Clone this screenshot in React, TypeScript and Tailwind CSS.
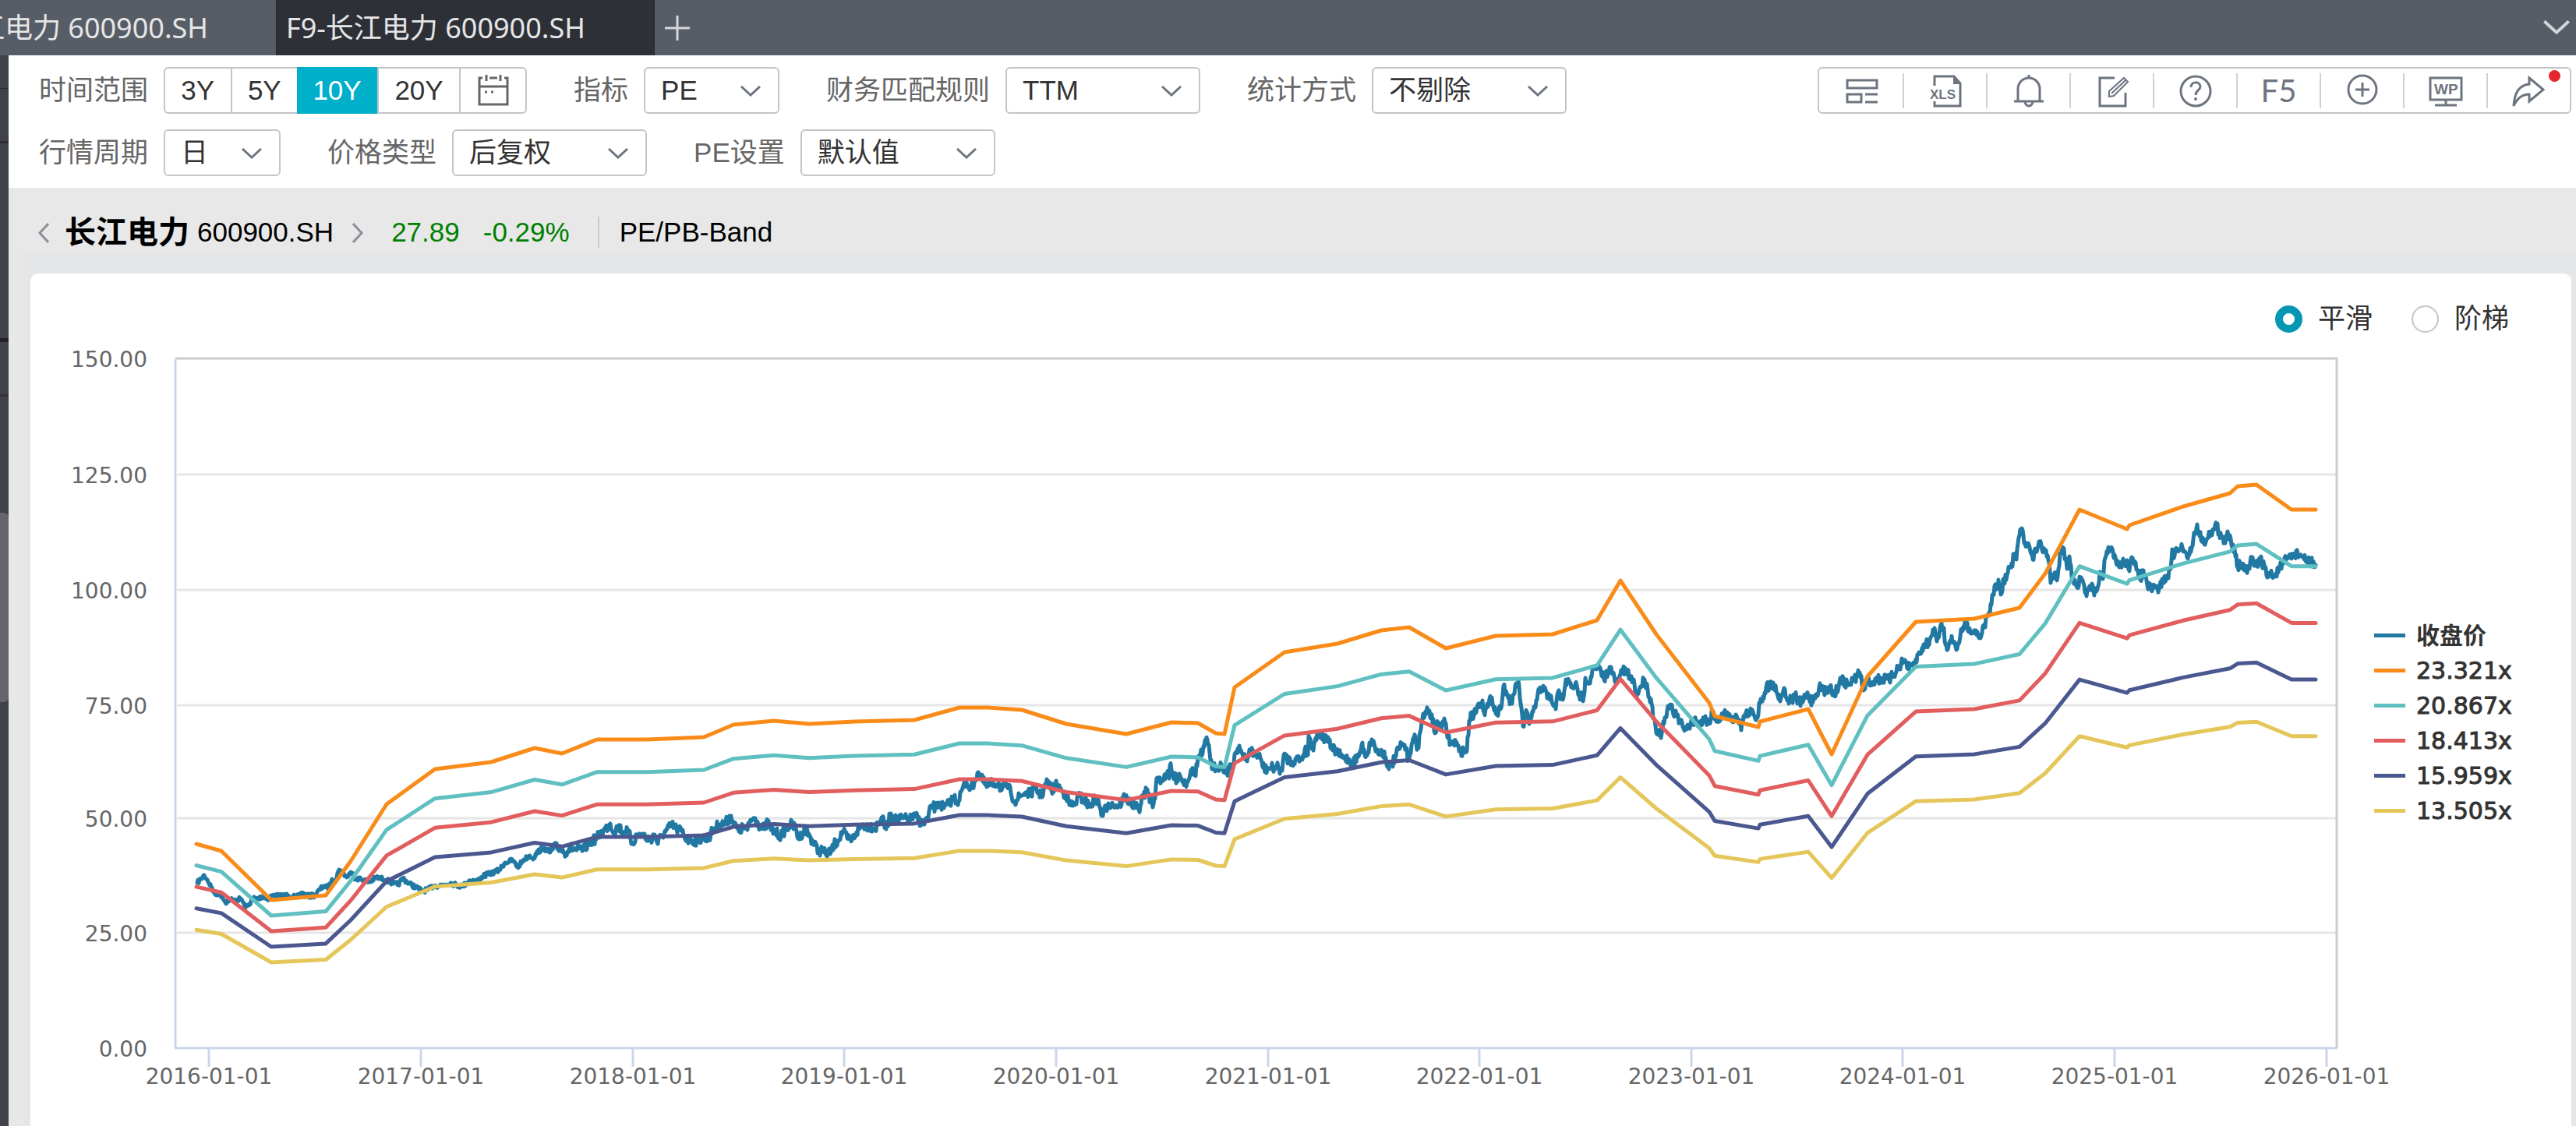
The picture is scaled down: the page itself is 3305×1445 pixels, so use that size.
import React, { useState } from "react";
import type { ReactNode } from "react";

const ranges = ["3Y", "5Y", "10Y", "20Y"];

const bands = [
  { label: "23.321x", multiple: 23.321, color: "#f98b19" },
  { label: "20.867x", multiple: 20.867, color: "#60bfc1" },
  { label: "18.413x", multiple: 18.413, color: "#e15d5e" },
  { label: "15.959x", multiple: 15.959, color: "#4b588f" },
  { label: "13.505x", multiple: 13.505, color: "#e4c65a" },
];

const closeColor = "#2178a3";

const yAxis = [
  { label: "150.00", y: 460 },
  { label: "125.00", y: 609 },
  { label: "100.00", y: 757 },
  { label: "75.00", y: 905 },
  { label: "50.00", y: 1050 },
  { label: "25.00", y: 1197 },
  { label: "0.00", y: 1345 },
];

const xAxis = [
  { label: "2016-01-01", x: 268 },
  { label: "2017-01-01", x: 540 },
  { label: "2018-01-01", x: 812 },
  { label: "2019-01-01", x: 1083 },
  { label: "2020-01-01", x: 1355 },
  { label: "2021-01-01", x: 1627 },
  { label: "2022-01-01", x: 1898 },
  { label: "2023-01-01", x: 2170 },
  { label: "2024-01-01", x: 2441 },
  { label: "2025-01-01", x: 2713 },
  { label: "2026-01-01", x: 2985 },
];

// Upper band, the other bands scale down from it
const topBand: [number, number][] = [
  [252, 1083], [284, 1092], [348, 1155], [418, 1149], [450, 1105], [496, 1032],
  [558, 987], [630, 978], [686, 960], [721, 967], [766, 949], [830, 949],
  [903, 946], [941, 930], [993, 925], [1038, 929], [1096, 926], [1173, 924],
  [1231, 908], [1267, 908], [1311, 911], [1368, 929], [1445, 942], [1503, 927],
  [1537, 928], [1560, 941], [1571, 942], [1584, 882], [1648, 837], [1716, 826],
  [1772, 809], [1808, 805], [1855, 832], [1919, 816], [1992, 814], [2049, 796],
  [2079, 745], [2125, 814], [2193, 902], [2200, 919], [2256, 933], [2258, 926],
  [2320, 910], [2350, 968], [2396, 868], [2458, 798], [2533, 794], [2591, 780],
  [2624, 736], [2668, 654], [2729, 679], [2732, 674], [2801, 650], [2861, 633],
  [2871, 624], [2895, 622], [2940, 654], [2971, 654],
];

const closePrice: number[] = [
  253, 1133, 258, 1128, 262, 1123, 266, 1129, 271, 1138, 276, 1148, 280, 1146, 285, 1150,
  289, 1158, 295, 1154, 300, 1156, 305, 1154, 310, 1154, 315, 1165, 320, 1160, 325, 1152,
  331, 1154, 336, 1150, 342, 1154, 350, 1149, 360, 1150, 370, 1149, 380, 1152, 386, 1146,
  394, 1150, 404, 1149, 410, 1142, 415, 1137, 420, 1140, 425, 1131, 430, 1130, 434, 1118,
  438, 1117, 445, 1126, 450, 1119, 456, 1127, 466, 1129, 474, 1132, 483, 1126, 495, 1129,
  505, 1134, 511, 1135, 517, 1127, 525, 1134, 533, 1138, 541, 1143, 549, 1142, 556, 1137,
  566, 1136, 578, 1133, 586, 1136, 594, 1137, 602, 1130, 612, 1131, 620, 1124, 629, 1121,
  640, 1117, 648, 1107, 658, 1104, 664, 1113, 672, 1103, 680, 1098, 685, 1101, 690, 1093,
  698, 1088, 705, 1094, 713, 1087, 720, 1089, 724, 1094, 732, 1088, 740, 1091, 750, 1090,
  757, 1078, 760, 1080, 774, 1067, 783, 1057, 788, 1068, 793, 1060, 800, 1068, 806, 1067,
  811, 1082, 817, 1073, 823, 1070, 829, 1075, 834, 1078, 840, 1071, 844, 1083, 849, 1072,
  854, 1067, 862, 1059, 868, 1064, 874, 1066, 881, 1077, 887, 1078, 895, 1079, 901, 1075,
  909, 1076, 916, 1063, 923, 1058, 930, 1057, 938, 1047, 942, 1058, 948, 1067, 954, 1061,
  959, 1065, 963, 1052, 969, 1050, 975, 1060, 981, 1064, 985, 1054, 989, 1065, 995, 1068,
  1002, 1073, 1008, 1064, 1014, 1058, 1020, 1062, 1025, 1077, 1032, 1063, 1039, 1073, 1045, 1084,
  1050, 1092, 1055, 1091, 1059, 1096, 1066, 1094, 1070, 1084, 1075, 1079, 1081, 1067, 1087, 1076,
  1093, 1078, 1099, 1068, 1106, 1059, 1115, 1060, 1123, 1063, 1131, 1049, 1137, 1064, 1143, 1044,
  1150, 1053, 1158, 1050, 1166, 1052, 1175, 1048, 1184, 1058, 1191, 1049, 1195, 1034, 1201, 1037,
  1205, 1030, 1211, 1037, 1217, 1032, 1223, 1024, 1230, 1028, 1234, 1014, 1240, 1004, 1246, 1012,
  1251, 1001, 1255, 991, 1259, 999, 1266, 1010, 1273, 1005, 1281, 1005, 1285, 1014, 1292, 1007,
  1297, 1018, 1302, 1028, 1309, 1022, 1316, 1017, 1321, 1019, 1328, 1012, 1336, 1021, 1344, 1003,
  1349, 1014, 1356, 1007, 1363, 1016, 1368, 1020, 1372, 1033, 1379, 1033, 1383, 1022, 1391, 1026,
  1398, 1035, 1405, 1024, 1410, 1032, 1414, 1047, 1422, 1031, 1429, 1033, 1436, 1034, 1443, 1022,
  1451, 1031, 1461, 1039, 1466, 1024, 1471, 1014, 1478, 1031, 1480, 1032, 1485, 998, 1491, 1001,
  1496, 993, 1500, 999, 1501, 982, 1505, 996, 1510, 1000, 1513, 993, 1518, 1003, 1523, 1004,
  1528, 988, 1533, 995, 1538, 970, 1543, 967, 1547, 951, 1551, 956, 1555, 987, 1560, 984,
  1568, 982, 1574, 990, 1580, 985, 1585, 966, 1590, 957, 1595, 972, 1600, 977, 1603, 962,
  1610, 968, 1617, 973, 1622, 987, 1630, 986, 1638, 984, 1645, 989, 1648, 967, 1653, 975,
  1658, 978, 1663, 974, 1670, 974, 1674, 962, 1678, 969, 1679, 944, 1684, 960, 1688, 947,
  1694, 940, 1700, 950, 1704, 946, 1707, 960, 1714, 964, 1722, 972, 1730, 974, 1735, 979,
  1743, 971, 1747, 956, 1753, 970, 1760, 949, 1764, 958, 1768, 967, 1774, 964, 1778, 972,
  1782, 987, 1790, 973, 1795, 960, 1802, 956, 1807, 974, 1812, 953, 1816, 947, 1819, 960,
  1825, 922, 1829, 913, 1837, 917, 1841, 941, 1845, 929, 1850, 932, 1854, 927, 1858, 947,
  1862, 955, 1868, 952, 1872, 964, 1882, 964, 1885, 925, 1888, 914, 1891, 918, 1895, 907,
  1899, 903, 1902, 899, 1904, 914, 1909, 907, 1914, 895, 1920, 917, 1925, 910, 1929, 880,
  1934, 892, 1940, 903, 1945, 877, 1949, 880, 1951, 903, 1954, 932, 1959, 914, 1962, 929,
  1966, 913, 1970, 908, 1973, 890, 1978, 887, 1982, 882, 1985, 896, 1990, 893, 1994, 906,
  1996, 910, 1999, 888, 2005, 898, 2008, 880, 2011, 872, 2016, 882, 2021, 878, 2025, 892,
  2032, 894, 2034, 870, 2039, 877, 2043, 860, 2050, 858, 2054, 862, 2058, 872, 2065, 856,
  2069, 865, 2073, 876, 2077, 874, 2080, 860, 2086, 863, 2091, 868, 2097, 878, 2100, 893,
  2104, 882, 2110, 872, 2114, 885, 2119, 903, 2122, 922, 2127, 942, 2132, 941, 2137, 920,
  2143, 904, 2147, 917, 2150, 912, 2155, 927, 2162, 935, 2167, 934, 2170, 924, 2177, 925,
  2184, 930, 2185, 921, 2193, 926, 2197, 914, 2205, 926, 2211, 917, 2216, 914, 2222, 926,
  2227, 917, 2232, 924, 2234, 937, 2237, 919, 2245, 913, 2251, 919, 2255, 921, 2257, 902,
  2262, 894, 2266, 882, 2271, 879, 2275, 876, 2280, 890, 2285, 896, 2289, 883, 2292, 896,
  2298, 899, 2303, 892, 2307, 900, 2312, 902, 2318, 891, 2325, 900, 2330, 891, 2334, 882,
  2340, 888, 2347, 881, 2353, 891, 2359, 882, 2361, 870, 2367, 877, 2371, 878, 2378, 873,
  2386, 863, 2391, 886, 2396, 872, 2402, 877, 2407, 871, 2414, 872, 2420, 871, 2424, 873,
  2429, 866, 2436, 855, 2444, 847, 2449, 859, 2457, 852, 2461, 840, 2465, 838, 2468, 827,
  2474, 826, 2479, 815, 2482, 806, 2485, 823, 2490, 802, 2494, 806, 2496, 827, 2500, 829,
  2502, 822, 2508, 824, 2511, 833, 2515, 817, 2519, 804, 2523, 801, 2530, 811, 2535, 809,
  2538, 816, 2543, 812, 2546, 803, 2550, 790, 2552, 786, 2555, 776, 2559, 752, 2563, 755,
  2564, 744, 2567, 763, 2571, 745, 2575, 738, 2578, 729, 2582, 727, 2583, 711, 2587, 718,
  2590, 690, 2594, 678, 2598, 696, 2602, 697, 2605, 708, 2608, 718, 2612, 706, 2616, 695,
  2620, 706, 2625, 706, 2629, 722, 2631, 748, 2636, 735, 2640, 740, 2643, 710, 2646, 702,
  2650, 716, 2652, 730, 2655, 714, 2658, 740, 2662, 744, 2665, 754, 2669, 743, 2674, 751,
  2677, 765, 2683, 752, 2687, 764, 2691, 755, 2694, 734, 2698, 743, 2701, 716, 2704, 710,
  2708, 704, 2713, 712, 2716, 725, 2720, 724, 2725, 722, 2729, 719, 2732, 733, 2734, 718,
  2738, 724, 2742, 731, 2748, 742, 2750, 732, 2755, 751, 2760, 757, 2765, 754, 2770, 756,
  2775, 744, 2781, 742, 2785, 730, 2787, 705, 2790, 713, 2794, 706, 2800, 702, 2805, 710,
  2808, 712, 2812, 702, 2814, 692, 2819, 673, 2822, 688, 2826, 690, 2829, 699, 2833, 690,
  2836, 682, 2840, 680, 2845, 672, 2846, 686, 2850, 690, 2855, 697, 2858, 682, 2862, 691,
  2867, 705, 2871, 728, 2874, 722, 2880, 732, 2886, 730, 2889, 716, 2893, 726, 2900, 719,
  2906, 727, 2909, 741, 2913, 736, 2918, 740, 2924, 730, 2930, 723, 2935, 716, 2942, 712,
  2948, 710, 2952, 712, 2958, 720, 2965, 719, 2971, 725,
];

const bandPoints = (multiple: number) =>
  topBand
    .map(([x, y]) => `${x},${(1345 - ((1345 - y) * multiple) / 23.321).toFixed(1)}`)
    .join(" ");

// Adds the daily wiggle between the sampled closes
const closePoints = () => {
  const out: string[] = [];
  let seed = 7;
  for (let i = 0; i < closePrice.length; i += 2) {
    const x = closePrice[i];
    const y = closePrice[i + 1];
    out.push(`${x},${y}`);
    if (i + 2 >= closePrice.length) break;
    const nx = closePrice[i + 2];
    const ny = closePrice[i + 3];
    const steps = nx - x;
    const amp = x < 700 ? 6 : 13;
    for (let s = 1; s < steps; s++) {
      seed = (seed * 16807) % 2147483647;
      const t = s / steps;
      const noise = (seed / 2147483647 - 0.5) * amp;
      out.push(`${(x + (nx - x) * t).toFixed(1)},${(y + (ny - y) * t + noise).toFixed(1)}`);
    }
  }
  return out.join(" ");
};

const Chevron = ({ className }: { className: string }) => (
  <svg viewBox="0 0 26 14" className={className} fill="none" stroke="currentColor" strokeWidth="3">
    <path d="M1 1l12 11L25 1" />
  </svg>
);

type FieldProps = { id: string; label: string; value: string; width: string };

const Field = ({ id, label, value, width }: FieldProps) => (
  <div className="flex items-center gap-5">
    <label htmlFor={id} className="text-[#666]">
      {label}
    </label>
    <div className="relative">
      <select
        id={id}
        className={`${width} h-[60px] appearance-none rounded-md border-2 border-[#c4c4c9] bg-white pl-5 text-[#333]`}
      >
        <option>{value}</option>
      </select>
      <Chevron className="pointer-events-none absolute right-6 top-6 w-[26px] text-[#6d7480]" />
    </div>
  </div>
);

const tools: { name: string; icon: ReactNode }[] = [
  {
    name: "布局",
    icon: (
      <>
        <path d="M6 11h38v10H6zM6 29h18v10H6z" />
        <path d="M29 29h16M29 39h16" />
      </>
    ),
  },
  {
    name: "导出XLS",
    icon: (
      <>
        <path d="M10 18V6h25l8 9v29H10v-6" />
        <path d="M34 5v11h10z" fill="currentColor" stroke="none" />
        <text x="4" y="35" fontSize="17" fontWeight="700" fill="currentColor" stroke="none">
          XLS
        </text>
      </>
    ),
  },
  {
    name: "提醒",
    icon: (
      <>
        <path d="M10 38V22a14 14 0 0 1 28 0v16" />
        <path d="M5 38h38M24 4v4M19 38a5 6 0 0 0 10 0" />
      </>
    ),
  },
  {
    name: "笔记",
    icon: (
      <>
        <path d="M27 8H8v36h33V27" />
        <path d="M20 32v-7L39 8l5 5-18 18zM23 28L41 11" strokeWidth="2" />
      </>
    ),
  },
  {
    name: "帮助",
    icon: (
      <>
        <circle cx="24" cy="25" r="19" />
        <path d="M18 20c0-8 12-8 12-1 0 5-6 5-6 11" />
        <circle cx="24" cy="35" r="2" fill="currentColor" stroke="none" />
      </>
    ),
  },
  { name: "F5", icon: null },
  {
    name: "添加",
    icon: (
      <>
        <circle cx="24" cy="23" r="18" />
        <path d="M24 14v18M15 23h18" />
      </>
    ),
  },
  {
    name: "WP",
    icon: (
      <>
        <path d="M4 8h40v28H4z" />
        <path d="M24 36v7M10 43h28" />
        <text x="9" y="29" fontSize="19" fontWeight="700" fill="currentColor" stroke="none">
          WP
        </text>
      </>
    ),
  },
  {
    name: "分享",
    icon: <path d="M24 8l18 15-18 15v-9C14 29 8 35 4 44 5 28 11 17 24 16z" />,
  },
];

const Tabs = () => (
  <div className="flex h-[71px] items-stretch justify-between bg-[#575d67] font-['Noto_Sans','Noto_Sans_CJK_SC',sans-serif] text-[36px] text-[#e6e6e6]">
    <div className="flex items-stretch">
      <button className="flex w-[354px] items-center justify-end overflow-hidden whitespace-nowrap pr-[87px]">
        长江电力 600900.SH
      </button>
      <button className="flex w-[486px] items-center border-x border-[#24262c] bg-[#2e3038] pl-3">
        F9-长江电力 600900.SH
      </button>
      <button aria-label="新建标签" className="px-3">
        <svg viewBox="0 0 34 34" className="w-[34px]" fill="none" stroke="#d5d7da" strokeWidth="3">
          <path d="M17 1v32M1 17h32" />
        </svg>
      </button>
    </div>
    <button aria-label="更多标签" className="pr-2">
      <Chevron className="w-[34px] text-[#d5d7da]" />
    </button>
  </div>
);

const Sidebar = () => (
  <div className="w-[11px] shrink-0 bg-[#3f4249]">
    <div className="h-[42px]" />
    <div className="h-px bg-[#2b2c31]" />
    <div className="h-[67px]" />
    <div className="h-[3px] bg-[#2f2e33]" />
    <div className="h-[250px]" />
    <div className="h-[5px] bg-[#222126]" />
    <div className="h-[67px]" />
    <div className="h-[3px] bg-[#343337]" />
    <div className="h-[149px]" />
    <div className="h-[243px] rounded-r-md bg-[#65646e]" />
  </div>
);

const Toolbar = () => {
  const [range, setRange] = useState("10Y");

  return (
    <div className="flex items-start justify-between bg-white pb-[15px] pl-[39px] pr-[6px] pt-[15px] text-[35px] leading-[40px]">
      <div className="flex flex-col gap-5">
        <div className="flex items-center gap-[60px]">
          <div className="flex items-center gap-5">
            <span className="text-[#666]">时间范围</span>
            <div className="flex w-[466px]">
              {ranges.map((r) => (
                <button
                  key={r}
                  onClick={() => setRange(r)}
                  className={`h-[60px] grow border-y-2 px-5 first:rounded-l-md first:border-l-2 ${
                    r === range
                      ? "border-[#00afca] bg-[#00afca] text-white"
                      : "border-[#c4c4c9] text-[#333] not-first:border-l-2"
                  }`}
                >
                  {r}
                </button>
              ))}
              <button
                aria-label="选择日期"
                className="flex h-[60px] w-[87px] shrink-0 items-center justify-center rounded-r-md border-2 border-[#c4c4c9] text-[#666]"
              >
                <svg viewBox="0 0 40 40" className="w-10" fill="none" stroke="currentColor" strokeWidth="3">
                  <path d="M6 4H2v34h36V4h-4M15 4h10M2 15h36M11 0v8M29 0v8" />
                  <path d="M9 22h3M17 22h3" />
                </svg>
              </button>
            </div>
          </div>
          <Field id="metric" label="指标" value="PE" width="w-[174px]" />
          <Field id="rule" label="财务匹配规则" value="TTM" width="w-[250px]" />
          <Field id="stat" label="统计方式" value="不剔除" width="w-[250px]" />
        </div>
        <div className="flex items-center gap-[60px]">
          <Field id="period" label="行情周期" value="日" width="w-[150px]" />
          <Field id="price" label="价格类型" value="后复权" width="w-[250px]" />
          <Field id="pe" label="PE设置" value="默认值" width="w-[250px]" />
        </div>
      </div>

      <div className="flex h-[60px] items-center rounded-md border-2 border-[#c4c4c9] text-[#6d7480]">
        {tools.map((tool, i) => (
          <button
            key={tool.name}
            aria-label={tool.name}
            className="relative flex h-[45px] w-[107px] items-center justify-center border-l-2 border-[#d0d0d3] first:border-l-0"
          >
            {tool.icon ? (
              <svg viewBox="0 0 48 48" className="w-12 shrink-0" fill="none" stroke="currentColor" strokeWidth="3">
                {tool.icon}
              </svg>
            ) : (
              <span className="font-['Lato',sans-serif] text-[40px]">{tool.name}</span>
            )}
            {i === tools.length - 1 && (
              <span className="absolute -top-1 right-3 h-[15px] w-[15px] rounded-full bg-[#e6262d]" />
            )}
          </button>
        ))}
      </div>
    </div>
  );
};

const StockHeader = () => (
  <div className="flex h-[81px] items-end pb-1 pl-[38px] text-[35px] leading-[40px] text-black">
    <button aria-label="上一只" className="self-end pb-[6px]">
      <svg viewBox="0 0 14 26" className="h-[26px] w-[14px]" fill="none" stroke="#8c9098" strokeWidth="3">
        <path d="M13 1L2 13l11 12" />
      </svg>
    </button>
    <h1 className="ml-5 text-[40px] font-bold">长江电力</h1>
    <span className="ml-[10px]">600900.SH</span>
    <button aria-label="下一只" className="ml-6 pb-[6px]">
      <svg viewBox="0 0 14 26" className="h-[26px] w-[14px]" fill="none" stroke="#8c9098" strokeWidth="3">
        <path d="M1 1l11 12L1 25" />
      </svg>
    </button>
    <span className="ml-9 text-[#008000]">27.89</span>
    <span className="ml-[30px] text-[#008000]">-0.29%</span>
    <div className="ml-9 mr-[26px] h-10 w-[2px] bg-[#ccc]" />
    <span>PE/PB-Band</span>
  </div>
);

const Chart = () => (
  <svg
    viewBox="39 427 3000 1018"
    className="min-w-0 flex-1 overflow-visible font-['DejaVu_Sans',sans-serif]"
    fill="none"
  >
    {yAxis.slice(1, -1).map((t) => (
      <path key={t.label} d={`M227 ${t.y}H2998`} stroke="#e6e6e6" strokeWidth="3" />
    ))}
    <path d="M225 460H2998V1345" stroke="#ccc" strokeWidth="3" />
    <path d="M225 461V1345" stroke="#ccd6eb" strokeWidth="3" />
    <path d="M224 1345H2999" stroke="#ccd6eb" strokeWidth="3" />
    {xAxis.map((t) => (
      <path key={t.label} d={`M${t.x} 1345v24`} stroke="#ccd6eb" strokeWidth="3" />
    ))}
    <polyline points={closePoints()} stroke={closeColor} strokeWidth="5" strokeLinejoin="round" strokeLinecap="round" />
    {bands.map((b) => (
      <polyline key={b.label} points={bandPoints(b.multiple)} stroke={b.color} strokeWidth="5" strokeLinejoin="round" strokeLinecap="round" />
    ))}
    {yAxis.map((t) => (
      <text key={t.label} x="189" y={t.y + 11} fontSize="28" fill="#666" textAnchor="end">
        {t.label}
      </text>
    ))}
    {xAxis.map((t) => (
      <text key={t.label} x={t.x} y="1391" fontSize="28" fill="#666" textAnchor="middle">
        {t.label}
      </text>
    ))}
  </svg>
);

const Legend = () => (
  <ul className="w-[260px] shrink-0 self-center pb-4 pl-[7px] font-['DejaVu_Sans','Noto_Sans_CJK_SC',sans-serif] text-[30px] leading-[45px] text-[#333]">
    <li className="flex h-[45px] items-center gap-[14px] font-bold">
      <span className="h-[5px] w-10 bg-[#2178a3]" />
      收盘价
    </li>
    {bands.map((b) => (
      <li key={b.label} className="flex h-[45px] items-center gap-[14px] [-webkit-text-stroke:1px]">
        <span className="h-[5px] w-10" style={{ backgroundColor: b.color }} />
        {b.label}
      </li>
    ))}
  </ul>
);

const ModeSwitch = () => {
  const [mode, setMode] = useState("平滑");

  return (
    <div className="flex h-9 items-center justify-end gap-[50px] pr-20 text-[35px] text-[#333]">
      {["平滑", "阶梯"].map((m) => (
        <label key={m} className="flex items-center gap-5">
          <input
            type="radio"
            name="mode"
            checked={mode === m}
            onChange={() => setMode(m)}
            className="h-[35px] w-[35px] appearance-none rounded-full border-2 border-[#c4c4c9] bg-white checked:border-[10px] checked:border-[#0497b4]"
          />
          {m}
        </label>
      ))}
    </div>
  );
};

const App = () => {
  return (
    <div className="flex min-h-screen flex-col overflow-x-hidden bg-[#e8e8e8] font-['Liberation_Sans','Noto_Sans_CJK_SC',sans-serif]">
      <Tabs />
      <div className="flex flex-1">
        <Sidebar />
        <div className="flex min-w-0 flex-1 flex-col">
          <Toolbar />
          <StockHeader />
          <div className="ml-[18px] flex-1 bg-[#e5e6e8] pl-[10px] pr-[6px] pt-[29px]">
            <div className="h-full rounded-t-[10px] bg-white pt-10">
              <ModeSwitch />
              <div className="flex">
                <Chart />
                <Legend />
              </div>
            </div>
          </div>
        </div>
      </div>
    </div>
  );
};

export default App;
